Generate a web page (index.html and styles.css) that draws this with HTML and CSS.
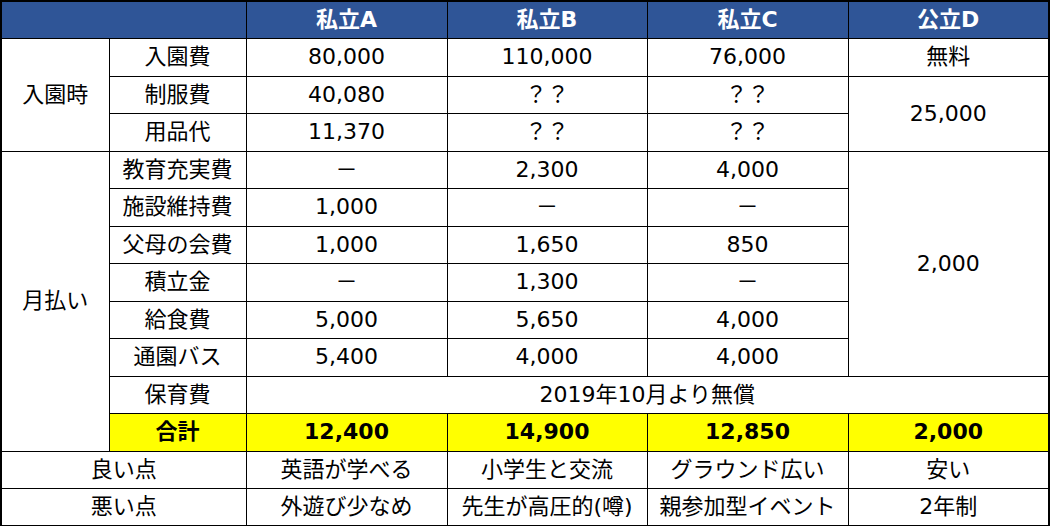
FILE: index.html
```html
<!DOCTYPE html>
<html lang="ja">
<head>
<meta charset="utf-8">
<link rel="stylesheet" href="styles.css">
</head>
<body>
<table class="cmp">
  <colgroup>
    <col class="c1"><col class="c2"><col class="c3"><col class="c4"><col class="c5"><col class="c6">
  </colgroup>
  <thead>
    <tr class="head">
      <th colspan="2"></th><th>私立A</th><th>私立B</th><th>私立C</th><th>公立D</th>
    </tr>
  </thead>
  <tbody>
    <tr><td rowspan="3">入園時</td><td>入園費</td><td>80,000</td><td>110,000</td><td>76,000</td><td>無料</td></tr>
    <tr><td>制服費</td><td>40,080</td><td>？？</td><td>？？</td><td rowspan="2">25,000</td></tr>
    <tr><td>用品代</td><td>11,370</td><td>？？</td><td>？？</td></tr>
    <tr><td rowspan="8">月払い</td><td>教育充実費</td><td>－</td><td>2,300</td><td>4,000</td><td rowspan="6">2,000</td></tr>
    <tr><td>施設維持費</td><td>1,000</td><td>－</td><td>－</td></tr>
    <tr><td>父母の会費</td><td>1,000</td><td>1,650</td><td>850</td></tr>
    <tr><td>積立金</td><td>－</td><td>1,300</td><td>－</td></tr>
    <tr><td>給食費</td><td>5,000</td><td>5,650</td><td>4,000</td></tr>
    <tr><td>通園バス</td><td>5,400</td><td>4,000</td><td>4,000</td></tr>
    <tr><td>保育費</td><td colspan="4">2019年10月より無償</td></tr>
    <tr class="total"><td>合計</td><td>12,400</td><td>14,900</td><td>12,850</td><td>2,000</td></tr>
    <tr><td colspan="2">良い点</td><td>英語が学べる</td><td>小学生と交流</td><td>グラウンド広い</td><td>安い</td></tr>
    <tr><td colspan="2">悪い点</td><td>外遊び少なめ</td><td>先生が高圧的(噂)</td><td>親参加型イベント</td><td>2年制</td></tr>
  </tbody>
</table>
</body>
</html>
```

FILE: styles.css
```css
html, body {
  margin: 0;
  padding: 0;
  background: #ffffff;
}
.cmp {
  border-collapse: collapse;
  table-layout: fixed;
  width: 1049px;
  height: 525px;
  font-family: "DejaVu Sans", "Noto Sans CJK JP", sans-serif;
  font-size: 22px;
  color: #000;
  border: 2px solid #000;
}
.c1 { width: 108px; }
.c2 { width: 137px; }
.c3 { width: 201px; }
.c4 { width: 200px; }
.c5 { width: 201px; }
.c6 { width: 201px; }
.cmp tr { height: 37.5px; }
.cmp th, .cmp td {
  border: 1px solid #000;
  padding: 0;
  text-align: center;
  vertical-align: middle;
  line-height: 1;
}
.head th {
  background: #2f5597;
  color: #ffffff;
  font-weight: bold;
}
.total td {
  background: #ffff00;
  font-weight: bold;
}
```
